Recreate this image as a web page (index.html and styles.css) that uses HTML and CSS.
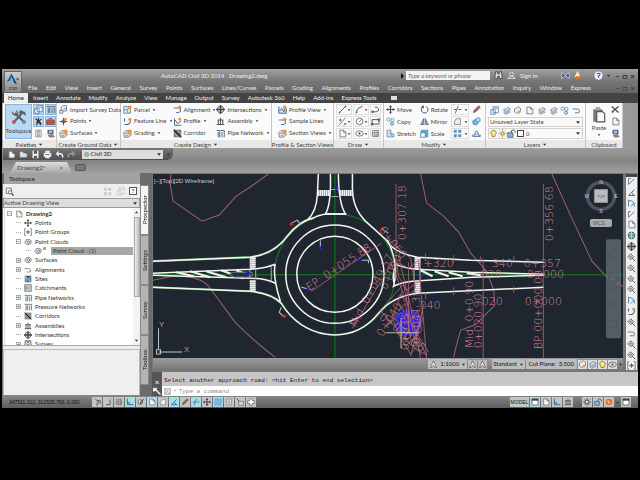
FILE: index.html
```html
<!DOCTYPE html>
<html lang="en">
<head>
<meta charset="utf-8">
<title>AutoCAD Civil 3D 2014 - Drawing2.dwg</title>
<link rel="stylesheet" href="styles.css">
</head>
<body>
<svg class="defs" aria-hidden="true">
<defs>
<symbol id="survey" viewBox="0 0 12 12"><path d="M3 8V3l2-2h5v7H5M1 7h4v4H1zM6 5h3" fill="#eef4fa" stroke="#536b88"/></symbol>
<symbol id="points" viewBox="0 0 12 12"><path d="M6 1v10M1 6h10M6 3l3 3-3 3-3-3z" fill="none" stroke="#555" stroke-width="1.3"/><circle cx="8.500" cy="3" r="2" fill="#f39136"/></symbol>
<symbol id="surface" viewBox="0 0 12 12"><path d="M1 5l3-3 6 1 1 5-4 3H2zM3 6l4-1 2 3M4 9h3" fill="#e8e8e8" stroke="#666"/><circle cx="9" cy="3" r="2.500" fill="#f39136"/></symbol>
<symbol id="parcel" viewBox="0 0 12 12"><path d="M1 2h9v9H1zM1 7l9-3M5 6l2 5" fill="#dceaf3" stroke="#4e7c9c"/><circle cx="9" cy="3" r="2.500" fill="#f39136"/></symbol>
<symbol id="line" viewBox="0 0 12 12"><path d="M2 10L10 2" stroke="#555" stroke-width="1.200"/><path d="M1 9h2v2H1zM9 1h2v2H9z" fill="#555"/></symbol>
<symbol id="feature" viewBox="0 0 12 12"><path d="M2 2v4M2 10h4q4-1 4-6" fill="none" stroke="#4d6480" stroke-width="1.400"/><circle cx="9" cy="3" r="2" fill="#f39136"/></symbol>
<symbol id="align" viewBox="0 0 12 12"><path d="M1 4h6q3 0 3 3t-3 3H4" fill="none" stroke="#5580a4" stroke-width="1.400"/><circle cx="9" cy="3" r="2.200" fill="#f39136"/></symbol>
<symbol id="align2" viewBox="0 0 12 12"><path d="M1 4h6q3 0 3 3t-3 2H4" fill="none" stroke="#667f98" stroke-width="1.300"/></symbol>
<symbol id="profile" viewBox="0 0 12 12"><path d="M2 2v9h9M3 4l3 5 5-4" fill="none" stroke="#456b92" stroke-width="1.300"/><circle cx="9" cy="2.500" r="2" fill="#f39136"/></symbol>
<symbol id="corridor" viewBox="0 0 12 12"><path d="M1 1h10v10H1z" fill="#777"/><path d="M2 2l8 8M2 6l4 4M6 2l4 4" stroke="#ddd"/><path d="M1 1l10 10" stroke="#222" stroke-width="1.500"/></symbol>
<symbol id="cross" viewBox="0 0 12 12"><circle cx="6" cy="6" r="4.500" fill="#ccc" stroke="#555"/><path d="M6 0v12M0 6h12" stroke="#444" stroke-width="2"/></symbol>
<symbol id="plus" viewBox="0 0 12 12"><path d="M4 1h4v3h3v4H8v3H4V8H1V4h3z" fill="#fff" stroke="#555"/></symbol>
<symbol id="assembly" viewBox="0 0 12 12"><path d="M6 1v10M2 4h8M1 10h10M3 4v6M9 4v6" fill="none" stroke="#555" stroke-width="1.400"/></symbol>
<symbol id="pipe" viewBox="0 0 12 12"><path d="M1 2h4v9M3 4v7M6 2h5v9M8 4v7" fill="none" stroke="#59697a" stroke-width="1.300"/></symbol>
<symbol id="pview" viewBox="0 0 12 12"><path d="M1 2v9h10V5" fill="#cde2f6" stroke="#3d74ab" stroke-width="1.300"/><path d="M2 8l3-3 3 4 2-5" fill="none" stroke="#444"/><circle cx="9" cy="3" r="2.400" fill="#f39136"/></symbol>
<symbol id="arc" viewBox="0 0 12 12"><path d="M2 10Q3 3 10 2" fill="none" stroke="#444" stroke-width="1.200"/><path d="M1 9h2v2H1z" fill="#555"/></symbol>
<symbol id="poly" viewBox="0 0 12 12"><path d="M2 9h6q3-1 2-4T5 3M1 8h2v2H1z" fill="none" stroke="#555" stroke-width="1.200"/></symbol>
<symbol id="slash" viewBox="0 0 12 12"><path d="M1 11L10 1M1 4h4M3 2v4M8 8l3 3M8 11l3-3" stroke="#555"/></symbol>
<symbol id="circle" viewBox="0 0 12 12"><circle cx="6" cy="6" r="4.500" fill="none" stroke="#555"/><path d="M5 7l4-4" stroke="#555"/></symbol>
<symbol id="rect" viewBox="0 0 12 12"><path d="M1.500 3.500h9v6h-9z" fill="none" stroke="#555" stroke-width="1.300"/><path d="M0 8h3v3H0zM9 2h3v3H9z" fill="#555"/></symbol>
<symbol id="frame" viewBox="0 0 12 12"><path d="M1.500 1.500h9v9h-9z" fill="#fff" stroke="#444"/><path d="M1 1h10v3H1z" fill="#444"/></symbol>
<symbol id="page" viewBox="0 0 12 12"><path d="M2.500 1.500h5l3 3v6h-8zM7.500 1.500v3h3" fill="#f5f5f5" stroke="#666"/></symbol>
<symbol id="eye" viewBox="0 0 12 12"><ellipse cx="6" cy="6" rx="5" ry="3.500" fill="none" stroke="#555"/><circle cx="6" cy="6" r="1.300" fill="#333"/></symbol>
<symbol id="hatch" viewBox="0 0 12 12"><path d="M2 2h8v8H2zM1 5h10M1 8h10M5 1v10M8 1v10" fill="none" stroke="#777"/></symbol>
<symbol id="move" viewBox="0 0 12 12"><path d="M6 1v10M1 6h10" stroke="#444" stroke-width="1.300"/><path d="M6 0l2 3H4zM6 12l2-3H4zM0 6l3-2v4zM12 6L9 4v4z" fill="#444"/></symbol>
<symbol id="rotate" viewBox="0 0 12 12"><path d="M8 2a4.500 4.500 0 1 1-5 1" fill="none" stroke="#555" stroke-width="1.300"/><path d="M5 0v5L1 3z" fill="#555"/></symbol>
<symbol id="copy" viewBox="0 0 12 12"><circle cx="3.500" cy="3.500" r="2.200" fill="#fff" stroke="#4a88b8"/><circle cx="8.500" cy="4" r="2.200" fill="#fff" stroke="#4a88b8"/><circle cx="8" cy="9" r="2.200" fill="#b9dcf4" stroke="#4a88b8"/></symbol>
<symbol id="mirror" viewBox="0 0 12 12"><path d="M5 2v8H1zM7 2v8h4z" fill="#8ab5da" stroke="#4b6078"/></symbol>
<symbol id="stretch" viewBox="0 0 12 12"><path d="M1.500 1.500h5v5h4v4h-9zM4 5l5 5" fill="#d5e9f8" stroke="#4e7fa9"/></symbol>
<symbol id="scale" viewBox="0 0 12 12"><path d="M1 1h10v10H1z" fill="#5da6d8"/><path d="M1 5h6v6H1z" fill="#fff" stroke="#3d74a0"/></symbol>
<symbol id="trans" viewBox="0 0 12 12"><path d="M1 1h10v10H1z" fill="#7fb8de" stroke="#4c8ab5" stroke-dasharray="1 1"/></symbol>
<symbol id="trim" viewBox="0 0 12 12"><path d="M1 6h4M7 6h4M3 11L7 1" stroke="#557" stroke-width="1.200"/></symbol>
<symbol id="pencil" viewBox="0 0 12 12"><path d="M2 10l1-3 6-6 2 2-6 6z" fill="#a76748" stroke="#555"/></symbol>
<symbol id="fillet" viewBox="0 0 12 12"><path d="M2 10V7q0-5 5-5h3v8z" fill="#eee" stroke="#777"/></symbol>
<symbol id="explode" viewBox="0 0 12 12"><circle cx="4.500" cy="7" r="3.500" fill="#7abfe6" stroke="#2b7dad"/><circle cx="8" cy="4" r="3" fill="#b6dcf2" stroke="#2b7dad"/></symbol>
<symbol id="array" viewBox="0 0 12 12"><path d="M1 1h4v4H1zM7 1h4v4H7zM1 7h4v4H1zM7 7h4v4H7z" fill="#5992c4"/></symbol>
<symbol id="offset" viewBox="0 0 12 12"><path d="M1 10h10V8H8V5Q6 0 4 5v3H1z" fill="#cfdae8" stroke="#496281"/></symbol>
<symbol id="layer" viewBox="0 0 12 12"><path d="M2 5l6-3 3 2-6 3zM2 7l3 2 6-3M2 9l3 2 6-3" fill="#e8eef4" stroke="#61768d"/></symbol>
<symbol id="layer2" viewBox="0 0 12 12"><path d="M2 4l5-3 3 2v4l-5 3-3-2z" fill="#e8eef4" stroke="#61768d"/><circle cx="8" cy="8" r="2" fill="#e8994b"/></symbol>
<symbol id="clip" viewBox="0 0 12 14"><path d="M1 2h8v11H1z" fill="#777"/><path d="M3 0h4v3H3z" fill="#aaa"/><path d="M4 4h5l2 2v7H4z" fill="#fafafa" stroke="#555"/></symbol>
<symbol id="cut" viewBox="0 0 12 12"><path d="M1 2l9 8M10 2L2 9" stroke="#444" stroke-width="1.500"/><circle cx="2" cy="9" r="1.500" fill="#666"/></symbol>
<symbol id="props" viewBox="0 0 12 12"><path d="M2 1h8v6H2z" fill="#4b6b9b"/><path d="M4 3h4M4 5h4" stroke="#fff"/><path d="M3 9l5-2 3 3-5 1z" fill="#d2925a" stroke="#555"/></symbol>
<symbol id="tools" viewBox="0 0 16 16"><path d="M3 13L11 4M4 4l9 9" stroke="#58616b" stroke-width="2.200"/><path d="M1 2l2 3 3-1-1-3q3 1 2 5L5 7Q0 6 1 2M9 1l5 2 1 4-3-2-4-1z" fill="#58616b"/><circle cx="3" cy="13" r="2" fill="#b85e4b"/><circle cx="13" cy="13" r="2" fill="#7e8992"/></symbol>
<symbol id="panel" viewBox="0 0 12 12"><path d="M4 1h7v8H4zM1 5h6v6H1z" fill="#fff" stroke="#4273a5"/><path d="M5 3h5" stroke="#4273a5"/></symbol>
<symbol id="prompt" viewBox="0 0 12 12"><path d="M1 1h10v10H1z" fill="#e4e4e4" stroke="#888"/><path d="M3 3l3 3-3 3M7 9h3" fill="none" stroke="#777"/></symbol>
<symbol id="person" viewBox="0 0 12 12"><path d="M6 1v5l-3 5M6 6l3 5M2 2l8 7M10 3L3 7" stroke="#333" stroke-width="1.400"/></symbol>
<symbol id="case" viewBox="0 0 12 12"><path d="M1 4h10v6H1z" fill="#d26054" stroke="#834"/><path d="M4 4V2h4v2M1 7h10" fill="none" stroke="#834"/></symbol>
<symbol id="calc" viewBox="0 0 12 12"><path d="M2.500 1.500h7v9h-7zM4 3h4M4 5h4M4 7h4M4 9h4" fill="#fafafa" stroke="#777"/></symbol>
<symbol id="save" viewBox="0 0 12 12"><path d="M2 1h8v10H2z" fill="#e9e9e9"/><path d="M4 1h4v4H4zM4 8h4v3H4z" fill="#555"/></symbol>
<symbol id="open" viewBox="0 0 12 12"><path d="M1 2h4l1 2h4v2l2-1-2 5H1z" fill="#ddd" stroke="#555" stroke-width=".5"/></symbol>
<symbol id="print" viewBox="0 0 12 12"><path d="M3 1h6v3h2v5H9v2H3V9H1V4h2z" fill="#eee"/><path d="M3 6h6" stroke="#555"/></symbol>
<symbol id="undo" viewBox="0 0 12 12"><path d="M3 5h5q3 1 2 5" fill="none" stroke="#eee" stroke-width="2"/><path d="M1 5l4-4v8z" fill="#eee"/></symbol>
<symbol id="redo" viewBox="0 0 12 12"><path d="M9 5H4q-3 1-2 5" fill="none" stroke="#999" stroke-width="2"/><path d="M11 5L7 1v8z" fill="#999"/></symbol>
<symbol id="search" viewBox="0 0 12 12"><path d="M1.500 1.500h7v7h-7z" fill="none" stroke="#666"/><circle cx="7" cy="7" r="2.300" fill="#fff" stroke="#444"/><path d="M9 9l2.500 2.500" stroke="#333" stroke-width="1.500"/></symbol>
<symbol id="cloud" viewBox="0 0 12 12"><path d="M3 9Q0 7 2 5q1-4 5-3 4 0 4 4-1 4-5 4zM4 6l2-2 3 2-2 2z" fill="#eee" stroke="#555"/></symbol>
<symbol id="group" viewBox="0 0 12 12"><path d="M3 1H1v10h2M9 1h2v10H9M6 3v6M3 6h6M6 4l2 2-2 2-2-2z" fill="none" stroke="#555"/></symbol>
<symbol id="sites" viewBox="0 0 12 12"><path d="M1 1h10v10H1z" fill="#597898"/><path d="M2 3l4 2 5-3M3 2v8M6 5l4 6" stroke="#e8e8c8"/></symbol>
<symbol id="catch" viewBox="0 0 12 12"><path d="M1 1h10v10H1z" fill="#c2d6e9" stroke="#567"/><path d="M2 2l4 4-4 4z" fill="#6eac71"/><path d="M6 2l4 3-3 5z" fill="#f0a03f"/></symbol>
<symbol id="wrench" viewBox="0 0 12 12"><path d="M2 2l8 8M1 1v4l3-1V1" stroke="#eee" stroke-width="2" fill="none"/></symbol>
<symbol id="bino" viewBox="0 0 12 12"><path d="M2 1h3v3h2V1h3l1 9H7V7H5v3H1z" fill="#ddd" stroke="#333"/></symbol>
<symbol id="user" viewBox="0 0 12 12"><circle cx="6" cy="4" r="2.500" fill="#888" stroke="#eee"/><path d="M1 10q1-3 5-3t5 3z" fill="#888" stroke="#eee"/></symbol>
<symbol id="down" viewBox="0 0 12 12"><path d="M2 4h8L6 9z" fill="#333"/></symbol>
<symbol id="gear" viewBox="0 0 12 12"><circle cx="6" cy="6" r="3" fill="#ddd" stroke="#444" stroke-width="1.500"/><path d="M6 0v3M6 9v3M0 6h3M9 6h3M2 2l2 2M8 8l2 2M10 2L8 4M2 10l2-2" stroke="#444"/></symbol>
<symbol id="globe" viewBox="0 0 12 12"><circle cx="6" cy="6" r="4.500" fill="#4e9b91" stroke="#345"/><path d="M2 4h8M2 8h8M6 1v10" stroke="#c7e3de"/></symbol>
<symbol id="angle" viewBox="0 0 12 12"><path d="M10 2L2 10h9M6 6q3 1 2 4" fill="none" stroke="#456a94" stroke-width="1.300"/></symbol>
<symbol id="curve" viewBox="0 0 12 12"><path d="M2 1v9M2 2q8 0 8 8M5 10l5-5" fill="none" stroke="#4a7aa8" stroke-width="1.200"/></symbol>
<symbol id="pin" viewBox="0 0 12 12"><path d="M2 2v8l8-8M2 2h3" fill="none" stroke="#5c7898" stroke-width="1.200"/></symbol>
<symbol id="snap" viewBox="0 0 12 12"><path d="M3 1l6 6-3 1v4M6 4h5v5" fill="none" stroke="#555" stroke-width="1.400"/></symbol>
<symbol id="cycle" viewBox="0 0 12 12"><path d="M1 1l4 4" stroke="#444" stroke-width="1.400"/><path d="M4 5h7v6H4z" fill="#cfe0c4" stroke="#4f7048"/></symbol>
<symbol id="corner" viewBox="0 0 12 12"><path d="M9 2v8H3" fill="none" stroke="#555" stroke-width="1.400"/></symbol>
<symbol id="ortho" viewBox="0 0 12 12"><path d="M2 1v9h9M2 7h3v3" fill="none" stroke="#38718f" stroke-width="1.500"/></symbol>
<symbol id="gem" viewBox="0 0 12 12"><circle cx="5" cy="6" r="3.500" fill="#eee" stroke="#444"/><path d="M4 7l6-5M5 9l2-4" stroke="#333" stroke-width="1.500"/></symbol>
<symbol id="mark" viewBox="0 0 12 12"><path d="M5 1l4 4-4 4-4-4z" fill="#ccc" stroke="#555"/><path d="M4 5h2M7 7l4 4" stroke="#444" stroke-width="1.200"/></symbol>
<symbol id="bulb" viewBox="0 0 12 12"><path d="M4 8Q1 6 3 3q3-3 6 0 2 3-1 5v2H4z" fill="#ffe98a" stroke="#896b33"/></symbol>
<symbol id="sun" viewBox="0 0 12 12"><circle cx="6" cy="6" r="2.500" fill="#f7cc59" stroke="#a27431"/><path d="M6 0v2M6 10v2M0 6h2M10 6h2M2 2l1 1M9 9l1 1M10 2L9 3M2 10l1-1" stroke="#93723f"/></symbol>
<symbol id="lock" viewBox="0 0 12 12"><path d="M1 5h7v6H1z" fill="#84b7d8" stroke="#456"/><path d="M6 5V2q3-2 5 1v2" fill="none" stroke="#456" stroke-width="1.300"/></symbol>
<symbol id="ann" viewBox="0 0 12 12"><path d="M6 1L2 10h2l2-3 2 3h2z" fill="#f8f8f8" stroke="#555"/></symbol>
</defs>
</svg>

<div class="app">
<header class="top">
  <button class="logo" aria-label="Application menu"><svg viewBox="0 0 21 21"><path d="M8 2L1 15l5-2 3-6 3 8 4 2z" fill="#1a70b7"/><path d="M8 2l1 5 3 8 4 2z" fill="#0c3f7c"/><path d="M1 15q5-4 11 0l-4-1z" fill="#69c1ed"/><path d="M15 9h4l-2 3z" fill="#333"/></svg><span>C3D</span></button>
  <div class="toprows">
    <div class="titlebar">
      <h1>AutoCAD Civil 3D 2014 &nbsp; Drawing2.dwg</h1>
      <div class="info"><span class="tri"></span><input type="text" class="find" aria-label="Search" placeholder="Type a keyword or phrase">
        <svg class="i"><use href="#bino"/></svg><svg class="i"><use href="#user"/></svg><a href="#signin">Sign In</a>
        <span class="infoicons"><svg class="i" viewBox="0 0 12 12"><path d="M1 2l10 8V2L1 10z" fill="#26468c" stroke="#dde"/></svg><svg class="i" viewBox="0 0 12 12"><path d="M6 0l4 8H2z" fill="#eee"/><path d="M4 7h7v4H4z" fill="#d47526"/></svg><svg class="i help" viewBox="0 0 12 12"><circle cx="6" cy="6" r="5.500" fill="#eef"/><path d="M4 4q2-2 4 0 0 2-2 3v2" stroke="#2c5e9c" stroke-width="1.500" fill="none"/></svg><svg class="d"><use href="#down"/></svg></span></div>
      <div class="win"><button>–</button><button>□</button><button>×</button></div>
    </div>
    <div class="menurow"><nav class="menu"><a href="#m">File</a><a href="#m">Edit</a><a href="#m">View</a><a href="#m">Insert</a><a href="#m">General</a><a href="#m">Survey</a><a href="#m">Points</a><a href="#m">Surfaces</a><a href="#m">Lines/Curves</a><a href="#m">Parcels</a><a href="#m">Grading</a><a href="#m">Alignments</a><a href="#m">Profiles</a><a href="#m">Corridors</a><a href="#m">Sections</a><a href="#m">Pipes</a><a href="#m">Annotation</a><a href="#m">Inquiry</a><a href="#m">Window</a><a href="#m">Express</a></nav>
    <div class="win dim"><button>–</button><button>□</button><button>×</button></div></div>
  </div>
</header>
<nav class="tabs"><button class="on">Home</button><button>Insert</button><button>Annotate</button><button>Modify</button><button>Analyze</button><button>View</button><button>Manage</button><button>Output</button><button>Survey</button><button>Autodesk 360</button><button>Help</button><button>Add-ins</button><button>Express Tools</button><button class="cam" aria-label="Ribbon display"></button></nav>

<div class="ribbonwrap">
<div class="ribbon">
  <section><div class="body pal">
    <button class="big sel"><svg><use href="#tools"/></svg><span>Toolspace</span></button>
    <div class="six"><button class="sel" aria-label="Panorama"><svg class="i"><use href="#panel"/></svg></button><button class="sel" aria-label="Properties"><svg class="i"><use href="#pipe"/></svg></button><button class="sel" aria-label="Survey"><svg class="i"><use href="#person"/></svg></button><button class="sel" aria-label="Toolbox"><svg class="i"><use href="#case"/></svg></button><button aria-label="Sheet"><svg class="i"><use href="#calc"/></svg></button><button aria-label="Palettes"><svg class="i"><use href="#props"/></svg></button></div>
  </div><h2>Palettes <svg class="d"><use href="#down"/></svg></h2></section>
  <section><div class="body col">
    <button><svg class="i"><use href="#survey"/></svg>Import Survey Data</button><button><svg class="i"><use href="#points"/></svg>Points<svg class="d"><use href="#down"/></svg></button><button><svg class="i"><use href="#surface"/></svg>Surfaces<svg class="d"><use href="#down"/></svg></button>
  </div><h2>Create Ground Data <svg class="d"><use href="#down"/></svg></h2></section>
  <section><div class="body col three">
    <button><svg class="i"><use href="#parcel"/></svg>Parcel<svg class="d"><use href="#down"/></svg></button><button><svg class="i"><use href="#align"/></svg>Alignment<svg class="d"><use href="#down"/></svg></button><button><svg class="i"><use href="#cross"/></svg>Intersections<svg class="d"><use href="#down"/></svg></button>
    <button><svg class="i"><use href="#feature"/></svg>Feature Line<svg class="d"><use href="#down"/></svg></button><button><svg class="i"><use href="#profile"/></svg>Profile<svg class="d"><use href="#down"/></svg></button><button><svg class="i"><use href="#assembly"/></svg>Assembly<svg class="d"><use href="#down"/></svg></button>
    <button><svg class="i"><use href="#surface"/></svg>Grading<svg class="d"><use href="#down"/></svg></button><button><svg class="i"><use href="#corridor"/></svg>Corridor</button><button><svg class="i"><use href="#pipe"/></svg>Pipe Network<svg class="d"><use href="#down"/></svg></button>
  </div><h2>Create Design <svg class="d"><use href="#down"/></svg></h2></section>
  <section><div class="body col in">
    <button><svg class="i"><use href="#pview"/></svg>Profile View<svg class="d"><use href="#down"/></svg></button><button><svg class="i"><use href="#align"/></svg>Sample Lines</button><button><svg class="i"><use href="#surface"/></svg>Section Views<svg class="d"><use href="#down"/></svg></button>
  </div><h2>Profile &amp; Section Views</h2></section>
  <section><div class="body draw">
    <button aria-label="Line"><svg class="i"><use href="#line"/></svg><svg class="d"><use href="#down"/></svg></button><button aria-label="Arc"><svg class="i"><use href="#arc"/></svg><svg class="d"><use href="#down"/></svg></button><button aria-label="Polyline"><svg class="i"><use href="#poly"/></svg></button>
    <button aria-label="Point"><svg class="i"><use href="#slash"/></svg><svg class="d"><use href="#down"/></svg></button><button aria-label="Circle"><svg class="i"><use href="#circle"/></svg><svg class="d"><use href="#down"/></svg></button><button aria-label="Rectangle"><svg class="i"><use href="#rect"/></svg></button>
    <button aria-label="Boundary"><svg class="i"><use href="#page"/></svg><svg class="d"><use href="#down"/></svg></button><button aria-label="Ellipse"><svg class="i"><use href="#eye"/></svg><svg class="d"><use href="#down"/></svg></button><button aria-label="Hatch"><svg class="i"><use href="#hatch"/></svg></button>
  </div><h2>Draw <svg class="d"><use href="#down"/></svg></h2></section>
  <section><div class="body col mod">
    <button><svg class="i"><use href="#move"/></svg>Move</button><button><svg class="i"><use href="#rotate"/></svg>Rotate</button><button class="bx" aria-label="Trim"><svg class="i"><use href="#trim"/></svg><svg class="d"><use href="#down"/></svg></button><button aria-label="Erase"><svg class="i"><use href="#pencil"/></svg></button>
    <button><svg class="i"><use href="#copy"/></svg>Copy</button><button><svg class="i"><use href="#mirror"/></svg>Mirror</button><button class="bx" aria-label="Fillet"><svg class="i"><use href="#fillet"/></svg><svg class="d"><use href="#down"/></svg></button><button aria-label="Explode"><svg class="i"><use href="#explode"/></svg></button>
    <button><svg class="i"><use href="#stretch"/></svg>Stretch</button><button><svg class="i"><use href="#scale"/></svg>Scale</button><button class="bx" aria-label="Array"><svg class="i"><use href="#array"/></svg><svg class="d"><use href="#down"/></svg></button><button aria-label="Offset"><svg class="i"><use href="#offset"/></svg></button>
  </div><h2>Modify <svg class="d"><use href="#down"/></svg></h2></section>
  <section><div class="body lay">
    <div class="row"><svg class="i"><use href="#panel"/></svg><svg class="i"><use href="#layer"/></svg><svg class="i"><use href="#layer2"/></svg><svg class="i"><use href="#page"/></svg><svg class="i"><use href="#layer"/></svg><svg class="i"><use href="#layer"/></svg><svg class="i"><use href="#copy"/></svg><svg class="i"><use href="#align2"/></svg></div>
    <select aria-label="Layer state"><option>Unsaved Layer State</option></select>
    <div class="layer"><svg class="i"><use href="#bulb"/></svg><svg class="i"><use href="#sun"/></svg><svg class="i"><use href="#lock"/></svg><span class="swatch"></span><select aria-label="Layer"><option>0</option></select></div>
  </div><h2>Layers <svg class="d"><use href="#down"/></svg></h2></section>
  <section><div class="body clipb">
    <button class="big"><svg><use href="#clip"/></svg><span>Paste</span><svg class="d"><use href="#down"/></svg></button>
    <div class="stack"><svg class="i"><use href="#cut"/></svg><svg class="i"><use href="#page"/></svg><svg class="i"><use href="#props"/></svg></div>
  </div><h2>Clipboard</h2></section>
</div>
</div>

<div class="quick"><div class="qin"><svg class="i"><use href="#page"/></svg><svg class="i"><use href="#open"/></svg><svg class="i"><use href="#save"/></svg><svg class="i"><use href="#print"/></svg><svg class="i"><use href="#undo"/></svg><svg class="i"><use href="#redo"/></svg><select aria-label="Workspace"><option>◎ Civil 3D</option></select><svg class="d"><use href="#down"/></svg></div></div>
<div class="docs"><button class="doc">Drawing2* <span>×</span></button><button class="plus" aria-label="New drawing"></button></div>

<main>
<aside class="space">
  <div class="pane">
    <h2>Toolspace</h2>
    <div class="ptools"><svg class="i"><use href="#search"/></svg><span></span><svg class="i faint"><use href="#array"/></svg><svg class="i faint"><use href="#panel"/></svg><button>?</button></div>
    <select aria-label="View"><option>Active Drawing View</option></select>
    <div class="treebox"><ul class="tree">
      <li class="l0"><i>−</i><svg class="i"><use href="#page"/></svg><b>Drawing2</b></li>
      <li><i class="n"></i><svg class="i"><use href="#move"/></svg>Points</li>
      <li><i class="n"></i><svg class="i"><use href="#group"/></svg>Point Groups</li>
      <li><i>−</i><svg class="i"><use href="#cloud"/></svg>Point Clouds</li>
      <li class="l2"><i class="n"></i><svg class="i"><use href="#cloud"/></svg><em></em><span class="hl">Point Cloud - (1)</span></li>
      <li><i>+</i><svg class="i"><use href="#cloud"/></svg>Surfaces</li>
      <li><i>+</i><svg class="i"><use href="#align2"/></svg>Alignments</li>
      <li><i class="n"></i><svg class="i"><use href="#sites"/></svg>Sites</li>
      <li><i class="n"></i><svg class="i"><use href="#catch"/></svg>Catchments</li>
      <li><i>+</i><svg class="i"><use href="#pipe"/></svg>Pipe Networks</li>
      <li><i>+</i><svg class="i"><use href="#pipe"/></svg>Pressure Networks</li>
      <li><i class="n"></i><svg class="i"><use href="#corridor"/></svg>Corridors</li>
      <li><i>+</i><svg class="i"><use href="#assembly"/></svg>Assemblies</li>
      <li><i class="n"></i><svg class="i"><use href="#cross"/></svg>Intersections</li>
      <li><i>+</i><svg class="i"><use href="#bino"/></svg>Survey</li>
    </ul><div class="scroll"><svg class="d up"><use href="#down"/></svg><b></b><svg class="d"><use href="#down"/></svg></div></div>
    <div class="preview"></div>
  </div>
  <div class="vtabs"><button class="on">Prospector</button><button>Settings</button><button>Survey</button><button>Toolbox</button></div>
</aside>

<div class="work">
  <div class="upper">
    <div class="model">
    <svg class="canvas" viewBox="153 174 469 184" preserveAspectRatio="xMidYMid slice" role="img" aria-label="Roundabout drawing">
      <g fill="none" stroke="#9a6078" stroke-width="1">
        <path d="M171 174l-1 9 3 18 29 20 17-6 17-19 14-9 18-13"/>
        <path d="M153 280l19-4q30-1 38 12l25 34q20 20 40 35"/>
        <path d="M420 174l6 29 17 13 15 16 12 21 16 18 7 19 1 15-19 19-15 6-4 14-3 13"/>
        <path d="M551 174l19 42 21 45 14 15 17 10"/>
      </g>
      <g stroke="#138019" fill="none"><path d="M153 274.500h469M334.500 174v184"/><circle cx="334.500" cy="274" r="60"/></g>
      <g stroke="#5f9f60" fill="none" stroke-width="2.200"><path d="M153 261l97-4q24-3 37-21 12-15 26-18M153 287l97 4q21 2 31 12"/></g>
      <g fill="none" stroke="#f4f6f2" stroke-width="1.500">
        <circle cx="334.500" cy="274" r="38"/><circle cx="334.500" cy="274" r="49"/>
        <path d="M153 261l97-4q24-3 37-21 12-15 26-18 5-3 13-4h20M307 220q9-8 10-25l1-21M352 174v14q0 20 13 33l20 18q8 14 32 18l53 3 73 2"/>
        <path d="M153 287l97 4q21 2 31 12 16 26 45 31 32 4 52-21 14-17 39-20l126-6"/>
        <path d="M275 264q-3 10 5 37M275 264q-10 4-25 5l-97 4M275 283q-10-5-25-5l-97-3"/>
        <path d="M387 240q12 24 6 46 8-4 19-5l60-4 71-2M395 264q8 4 22 5l53 3 73 2M395 266q-4 10-1 18"/>
        <path d="M330 174q1 30-5 40h20q-7-12-7-40"/>
      </g>
      <g stroke="#eef2ee" stroke-width="2.200"><path d="M176 272l18 4M190 271l20 6M206 271l20 6M221 270l22 8M236 270l12 5M420 270l12 6M434 271l14 5M448 272l14 4M466 273l14 2"/></g>
      <path d="M233 272h19v5h-18l-5-3z" fill="#26333b" stroke="#8d9a9a" stroke-width=".700"/>
      <g fill="none" stroke="#eee" stroke-dasharray="1.700 .300"><path d="M252.500 257v12M252.500 280v11M417 257v12M417 282v11" stroke-width="6"/><path d="M317 193h13M339 193h14" stroke-width="6"/></g>
      <path d="M249.500 269v10M255.500 269v10M413.500 269v12M419.500 269v12M331 189.500h7M331 196.500h7M271 267v14" stroke="#a7afb0"/>
      <g stroke="#bbc3c4" fill="none"><path d="M291 223l6-3 3 4M281 307l-2 5 4 4M301 287l8 2M320 240v8M360 260h8v3M381 229l7 4M158.500 349V328M159 351.500h23"/><path d="M156.500 349.500h4v4h-4z"/></g>
      <g fill="#1420e8"><circle cx="320" cy="248" r="1.800"/><circle cx="360" cy="260" r="1.800"/><circle cx="308" cy="288" r="1.800"/><circle cx="248" cy="273" r="2"/><circle cx="336" cy="188" r="2"/><circle cx="420" cy="276" r="2"/><circle cx="433" cy="298" r="1"/></g>
      <g fill="#e02020"><circle cx="291" cy="224" r="1.800"/><circle cx="284" cy="316" r="1.800"/><circle cx="382" cy="229" r="1.800"/></g>
      <circle cx="408" cy="322" r="13.500" fill="#2a25d8"/>
      <g stroke="#b06674" fill="none" stroke-width=".800"><path d="M395.500 184v96M542.500 184v174M482.500 260v98M408 262v70M418 262l8 96M311 291l70-48M352 328l40-66M380 310l34 38 12 6M398 256l12 50 10 52M386 238l24 20 5 30M378 312l25-28 12 60 8-40M385 327l20-24 6 40 12-26M425 253v8M453 255v8M425 292v7M453 287v8M480 256v7M513 256v7M513 286v7M398 302l30 50M410 356l12-46M400 336l22 18M390 262l18 44M402 290l-10 26 20 20M393 320l8-8 6 12 10-14 4 20-16 16-8-14zM402 340l8 14 10-12 6 14M396 262l12 6 10-8 2 20-14 10-8-14z"/></g>
      <g class="cad">
        <text transform="translate(405 240) rotate(-90)">0+307.18</text>
        <text transform="translate(552 241) rotate(-90)">0+356.68</text>
        <text transform="translate(309 291) rotate(-34)">EP: 0+055.88</text>
        <text transform="translate(355 328) rotate(-62)">Mid: 0+049.57</text>
        <text x="423" y="267">+320</text><text x="491" y="267">340</text><text x="523" y="267">0+357</text>
        <text x="480" y="278">020</text><text x="526" y="278">0+000</text><text x="415" y="309">-040</text><text x="481" y="305">020</text><text x="524" y="305">0+000</text>
        <text transform="translate(541 349) rotate(-90)">BP:00+000.00</text>
        <text transform="translate(472 348) rotate(-90)">Mid: 0+0.90</text><text transform="translate(481 348) rotate(-90)">0+020.90</text>
        <text transform="translate(408 350) rotate(-90)">0+035</text><text transform="translate(419 344) rotate(-90)">0+041.38</text>
        <text transform="translate(382 337) rotate(-58)">0+040.2</text><text transform="translate(378 230) rotate(52)">0+060</text>
        <text transform="translate(378 318) rotate(38)">0+020.36</text><text transform="translate(386 290) rotate(-65)">0+080</text>
      </g>
      <path d="M385 332.500h31M400.500 318v30" stroke="#b8bcaa" fill="none"/>
      <g class="vp"><text x="154" y="183">[−][Top][2D Wireframe]</text></g>
      <g class="axis"><text x="159" y="327">Y</text><text x="184" y="352">X</text></g>
      <circle cx="600" cy="196" r="13.500" fill="none" stroke="#4c545d" stroke-width="3.500"/>
      <path d="M593.500 189.500h13v13h-13z" fill="#b9bcbf" stroke="#8f9296"/>
      <g class="cube"><text x="600" y="198">TOP</text></g><g class="nesw"><text x="600" y="184">N</text><text x="600" y="213">S</text><text x="586" y="198">W</text><text x="615" y="198">E</text></g>
      <rect x="589" y="219" width="22" height="8" rx="2" fill="#a7abae"/><g class="wcs"><text x="598" y="225">WCS</text></g>
      <rect x="605" y="239" width="15" height="99" rx="2" fill="#68707a" opacity=".750"/>
      <g fill="none" stroke="#4f5862" stroke-width="1.300"><circle cx="612.500" cy="253" r="4"/><path d="M608 272h8v9h-8zM612.500 300v9M608 304h9"/><circle cx="612.500" cy="288" r="3"/><path d="M609 320h7v7h-7z"/></g>
    </svg>
    <div class="mbar"><span class="mb"><svg class="i"><use href="#ann"/></svg>1:1000<svg class="d"><use href="#down"/></svg></span><svg class="i"><use href="#ann"/></svg><svg class="i"><use href="#ann"/></svg><span class="mb std">Standard<svg class="d"><use href="#down"/></svg></span><span class="cutp">Cut Plane:&nbsp; 3.500</span><svg class="i lit"><use href="#layer2"/></svg><svg class="i lit"><use href="#layer"/></svg><svg class="i lit"><use href="#bulb"/></svg><svg class="i lit"><use href="#eye"/></svg><svg class="d"><use href="#down"/></svg></div>
    </div>
    <div class="rail"><svg class="i"><use href="#pin"/></svg><svg class="i"><use href="#angle"/></svg><svg class="i"><use href="#curve"/></svg><svg class="i"><use href="#pin"/></svg><svg class="i"><use href="#page"/></svg><svg class="i"><use href="#globe"/></svg><svg class="i"><use href="#cross"/></svg><svg class="i"><use href="#mark"/></svg><svg class="i"><use href="#mark"/></svg><svg class="i"><use href="#mark"/></svg><svg class="i"><use href="#mark"/></svg><svg class="i"><use href="#curve"/></svg><svg class="i"><use href="#feature"/></svg><svg class="i"><use href="#mark"/></svg><svg class="i"><use href="#align2"/></svg><svg class="i"><use href="#mark"/></svg><svg class="i"><use href="#mark"/></svg><svg class="i"><use href="#group"/></svg></div>
  </div>
  <div class="cmd"><div class="grip"><button aria-label="Close">×</button><svg class="i"><use href="#wrench"/></svg></div><div class="lines"><p>Select another approach road: &lt;hit Enter to end selection&gt;</p><label><svg class="i"><use href="#prompt"/></svg><span>-</span><input type="text" placeholder="Type a command" aria-label="Command"></label></div></div>
</div>
</main>

<footer><span class="coords">347511.312, 312525.793, 0.000</span>
<div class="toggles"><button aria-label="Infer"><svg class="i"><use href="#snap"/></svg></button><button aria-label="Snap"><svg class="i"><use href="#corner"/></svg></button><button aria-label="Grid"><svg class="i"><use href="#hatch"/></svg></button><button class="on" aria-label="Ortho"><svg class="i"><use href="#ortho"/></svg></button><button aria-label="Polar"><svg class="i"><use href="#gem"/></svg></button><button class="on" aria-label="Object snap"><svg class="i"><use href="#page"/></svg></button><button aria-label="3D snap"><svg class="i"><use href="#fillet"/></svg></button><button class="on" aria-label="Tracking"><svg class="i"><use href="#angle"/></svg></button><button aria-label="Dynamic UCS"><svg class="i"><use href="#pencil"/></svg></button><button class="on" aria-label="Dynamic input"><svg class="i"><use href="#trim"/></svg></button><button aria-label="Lineweight"><svg class="i"><use href="#move"/></svg></button><button class="on" aria-label="Transparency"><svg class="i"><use href="#trans"/></svg></button><button aria-label="Quick properties"><svg class="i"><use href="#calc"/></svg></button><button aria-label="Cycling"><svg class="i"><use href="#cycle"/></svg></button><button aria-label="Monitor"><svg class="i"><use href="#plus"/></svg></button></div>
<div class="right"><button class="mtext">MODEL</button><button class="on" aria-label="Model"><svg class="i"><use href="#frame"/></svg></button><button aria-label="Layout"><svg class="i"><use href="#page"/></svg></button><button aria-label="Layouts"><svg class="i"><use href="#ortho"/></svg></button><button aria-label="Drawings"><svg class="i"><use href="#assembly"/></svg></button><span class="gap"></span><button aria-label="Workspace"><svg class="i"><use href="#gear"/></svg></button><button aria-label="Lock"><svg class="i"><use href="#lock"/></svg></button><button aria-label="Isolate"><svg class="i" viewBox="0 0 12 12"><circle cx="6" cy="6" r="5" fill="#e6702c"/><path d="M4 4l3 4" stroke="#fbd5bb" stroke-width="2"/></svg></button><svg class="d"><use href="#down"/></svg><button aria-label="Clean screen"><svg class="i"><use href="#frame"/></svg></button></div></footer>
</div>
</body>
</html>
```
FILE: styles.css
```css
* { box-sizing: border-box; }
body { margin: 0; min-height: 100vh; background: #000; color: #444; display: flex; flex-direction: column; padding: 69px 2px 72px; font: 6px/8px Lato, "Open Sans", sans-serif; }
button, input, select { font: inherit; color: inherit; border: 0; padding: 0; margin: 0; background: none; border-radius: 0; outline: 0; }
button { display: flex; align-items: center; white-space: nowrap; }
select { appearance: none; }
a { color: inherit; text-decoration: none; }
h1, h2, p, ul { margin: 0; padding: 0; font: inherit; }
svg { display: block; flex: none; }
.defs { position: absolute; width: 0; height: 0; }
.i { width: 9px; height: 9px; }
.d { width: 5px; height: 5px; }
.app { flex: 1; display: flex; flex-direction: column; background: #8c8c8c; min-height: 0; }

.top { display: flex; height: 24px; padding: 0 0 0 2px; background: linear-gradient(#a0a0a0, #777 50%, #646464); color: #eee; }
.logo { flex-direction: column; width: 18px; height: 22px; margin-top: 2px; background: linear-gradient(#ccc, #888); border: 1px solid #666; font-size: 4px; line-height: 4px; color: #222; }
.logo svg { width: 16px; height: 15px; }
.toprows { flex: 1; display: flex; flex-direction: column; }
.titlebar { height: 13px; display: flex; align-items: center; }
.titlebar h1 { flex: 1; padding-left: 139px; }
.info { display: flex; align-items: center; gap: 4px; width: 210px; }
.tri { border: 3px solid transparent; border-left-color: #111; border-right: 0; }
.find { width: 84px; height: 9px; background: #f4f4f4; color: #555; font-style: italic; padding-left: 2px; margin-left: -2px; }
.find::placeholder { color: #666; }
.infoicons { display: flex; gap: 3px; align-items: center; margin-left: auto; }
.help { margin-left: 9px; }
.win { display: flex; gap: 3px; width: 27px; justify-content: flex-end; padding-right: 3px; font-size: 8px; font-weight: bold; color: #222; }
.menurow { display: flex; height: 11px; align-items: center; }
.menu { flex: 1; display: flex; justify-content: space-between; padding: 0 20px 0 6px; }
.dim { color: #444; }

.tabs { display: flex; height: 10px; padding-left: 2px; gap: 8px; background: #434343; color: #eee; }
.tabs .on { background: #eceeef; color: #222; width: 24px; justify-content: center; margin-right: -3px; }
.cam { width: 6px; height: 4px; background: #ddd; align-self: center; margin-left: 6px; }

.ribbonwrap { background: linear-gradient(90deg, #aaa, #999); padding: 0 15px 0 1px; height: 45px; }
.ribbon { display: grid; height: 45px; grid-template-columns: 54fr 64fr 151fr 62fr 50fr 102fr 100fr 37fr; background: #fafafa; }
.ribbon section { border-right: 1px solid #c6c6c6; display: flex; flex-direction: column; min-width: 0; }
.ribbon h2 { height: 9px; background: #e8e8e8; display: flex; align-items: center; justify-content: center; gap: 2px; white-space: nowrap; }
.body { flex: 1; height: 36px; padding: 1px 2px; }
.col button { gap: 2px; }
.col .d, .draw .d { width: 4px; height: 4px; }
.col { display: grid; grid-auto-rows: 1fr; }
.three { grid-template-columns: 49fr 47fr 51fr; }
.in { padding-left: 6px; }
.pal { display: flex; gap: 1px; }
.big { flex-direction: column; justify-content: center; gap: 2px; width: 27px; }
.big svg:first-child { width: 16px; height: 16px; }
.big .d { width: 4px; height: 4px; }
.sel { background: #b9d9f2; border: 1px solid #86b5df; }
.six { display: grid; grid-template-columns: 1fr 1fr; grid-auto-rows: 1fr; flex: 1; gap: 1px; }
.six button, .draw button { justify-content: center; }
.draw { display: grid; grid-template-columns: 17fr 17fr 11fr; grid-auto-rows: 1fr; gap: 1px; }
.draw button, .bx { border: 1px solid #dedede; justify-content: center; }
.mod { grid-template-columns: 34fr 32fr 18fr 14fr; row-gap: 1px; }
.mod button:nth-child(4n) { justify-content: center; }
.lay { display: flex; flex-direction: column; gap: 1px; }
.row { display: flex; justify-content: space-between; padding: 1px 2px; height: 12px; align-items: center; }
.lay select { height: 10px; padding-left: 1px; }
.lay > select, .layer, .space select, .quick select { background: url("data:image/svg+xml,%3Csvg xmlns='http://www.w3.org/2000/svg' viewBox='0 0 6 4'%3E%3Cpath d='M0 0h6L3 4z' fill='%23333'/%3E%3C/svg%3E") right 2px center / 4px 3px no-repeat; }
.lay > select, .layer { border: 1px solid #d2d2d2; }
.layer { display: flex; align-items: center; height: 11px; }
.layer select { flex: 1; }
.swatch { width: 7px; height: 7px; border: 1px solid #444; margin: 0 1px; }
.clipb { display: flex; justify-content: space-between; }
.clipb .big { width: 22px; gap: 1px; }
.stack { display: flex; flex-direction: column; justify-content: space-around; }

.quick { background: linear-gradient(#9c9c9c, #868686); height: 12px; padding-left: 1px; }
.qin { width: 170px; height: 12px; background: linear-gradient(#777, #4e4e4e); display: flex; align-items: center; gap: 3px; padding: 0 2px 0 4px; border-radius: 0 0 6px 0; }
.quick select { flex: 1; height: 9px; background-color: #ddd; color: #222; padding-left: 2px; margin-left: 3px; }
.docs { height: 13px; background: linear-gradient(#828282, #a0a0a0); display: flex; align-items: flex-end; padding-left: 8px; gap: 3px; }
.doc { width: 62px; height: 11px; background: linear-gradient(#ddd, #a7a7a7); clip-path: polygon(6px 0, 57px 0, 100% 100%, 0 100%); justify-content: space-between; padding: 0 9px 0 7px; }
.plus { width: 11px; height: 7px; background: #777; border: 1px solid #555; border-radius: 2px; margin-bottom: 2px; }

main { flex: 1; display: flex; min-height: 0; background: #6b6b6b; }
.space { display: flex; width: 148px; padding-left: 1px; }
.pane { width: 137px; display: flex; flex-direction: column; background: #efefef; }
.pane h2 { height: 11px; background: #a2a2a2; color: #222; line-height: 11px; padding-left: 5px; border-left: 1px solid #666; }
.ptools { display: flex; height: 14px; align-items: center; gap: 4px; padding: 0 3px 0 2px; }
.ptools span { flex: 1; }
.ptools button { width: 8px; height: 8px; border: 1px solid #555; justify-content: center; font-weight: bold; background: #fff; }
.faint { opacity: .35; filter: grayscale(1); }
.space select { height: 10px; border: 1px solid #999; background-color: #ddd; padding-left: 0; }
.treebox { height: 138px; background: #fff; display: flex; overflow: hidden; border-bottom: 1px solid #aaa; color: #333; }
.tree { flex: 1; height: 141px; display: flex; flex-direction: column; list-style: none; border-left: 1px solid #ddd; margin-left: 1px; padding-top: 1px; }
.tree li { flex: 1; display: flex; align-items: center; gap: 3px; padding-left: 11px; white-space: nowrap; }
.tree .l0 { padding-left: 2px; }
.tree .l2 { padding-left: 21px; }
.tree i { width: 5px; height: 5px; border: 1px solid #aaa; font: 5px/3px "Liberation Sans", sans-serif; text-align: center; }
.tree i.n { border-width: 0 0 1px; border-bottom-style: dotted; height: 1px; }
.tree em { width: 3px; height: 3px; background: #e0a42d; margin: -4px -2px 0; }
.tree .i { width: 8px; height: 8px; }
.hl { background: #a7a7a7; flex: 1; padding-left: 2px; margin-left: 4px; }
.scroll { width: 7px; background: #f2f2f2; display: flex; flex-direction: column; align-items: center; justify-content: space-between; padding: 2px 0; }
.scroll b { width: 6px; height: 80px; background: linear-gradient(90deg, #eee, #bbb); border: 1px solid #aaa; margin-bottom: 40px; }
.up { transform: rotate(180deg); }
.preview { flex: 1; margin-top: 3px; border: 1px solid #bbb; border-bottom-color: #888; }
.vtabs { width: 9px; padding-top: 12px; display: flex; flex-direction: column; }
.vtabs button { height: 50px; writing-mode: vertical-rl; transform: rotate(180deg); background: #b4b4b4; border: 1px solid #888; justify-content: center; color: #222; }
.vtabs .on { background: #f5f5f5; }

.work { flex: 1; min-width: 0; display: flex; flex-direction: column; padding-left: 2px; }
.upper { flex: 1; min-height: 0; display: flex; gap: 3px; padding: 1px 1px 2px; background: #777; }
.model { flex: 1; min-width: 0; display: flex; flex-direction: column; }
.canvas { flex: 1; width: 100%; min-height: 0; background: #1f2630; }
.canvas text { font-family: "Liberation Sans", sans-serif; font-size: 6px; fill: #ccc; }
.cad text { font-family: "DejaVu Sans Light", "DejaVu Sans", sans-serif; font-weight: 200; font-size: 11px; fill: #d98596; }
.canvas .axis text { font-size: 8px; fill: #9aa2a5; }
.canvas .nesw text, .canvas .cube text, .canvas .wcs text { font-size: 5px; text-anchor: middle; fill: #d0d3d5; }
.canvas .cube text { font-size: 4px; fill: #555; }
.canvas .wcs text { fill: #555; }
.mbar { height: 12px; background: linear-gradient(#9a9a9a, #777); display: flex; align-items: center; justify-content: flex-end; gap: 1px; }
.mb, .cutp { height: 10px; line-height: 10px; display: flex; align-items: center; gap: 2px; background: #bcbcbc; padding: 0 1px; color: #111; }
.cutp { padding: 0 3px; }
.std { margin-left: 4px; }
.mbar > .i { background: #bbb; }
.mbar > .lit { background: #dedede; }
.rail { width: 11px; background: #efefef; border-top: 3px solid #444; display: flex; flex-direction: column; align-items: center; justify-content: space-between; overflow: hidden; }
.rail .i { width: 9px; height: 9px; }
.cmd { height: 24px; display: flex; background: #c6c6c6; }
.grip { width: 10px; background: #555; color: #fff; display: flex; flex-direction: column; justify-content: space-between; align-items: center; padding-top: 6px; font-size: 8px; }
.lines { flex: 1; display: flex; flex-direction: column; font: 6px/8px "Liberation Mono", monospace; color: #222; }
.lines p { flex: 1; padding: 5px 0 0 2px; }
.lines label { height: 10px; background: #fff; display: flex; align-items: center; gap: 2px; padding-left: 2px; }
.lines input { flex: 1; font-style: italic; height: 9px; }
.lines .i { width: 7px; height: 7px; }
.lines input::placeholder { color: #888; }

footer { height: 12px; background: linear-gradient(#858585, #5d5d5d); display: flex; align-items: center; padding-left: 7px; }
.coords { width: 83px; color: #111; white-space: nowrap; font-family: "Liberation Sans", sans-serif; font-size: 5px; }
.toggles, .right { display: flex; align-items: center; gap: 1px; }
footer button { width: 10px; height: 10px; background: #c4c4c4; justify-content: center; }
footer button .i { width: 8px; height: 8px; }
footer .on { background: #a5dfec; }
.right { margin-left: auto; padding-right: 7px; }
.right .gap { width: 7px; }
footer .mtext { width: 19px; font-family: "Liberation Sans", sans-serif; font-size: 5px; color: #111; }
```
